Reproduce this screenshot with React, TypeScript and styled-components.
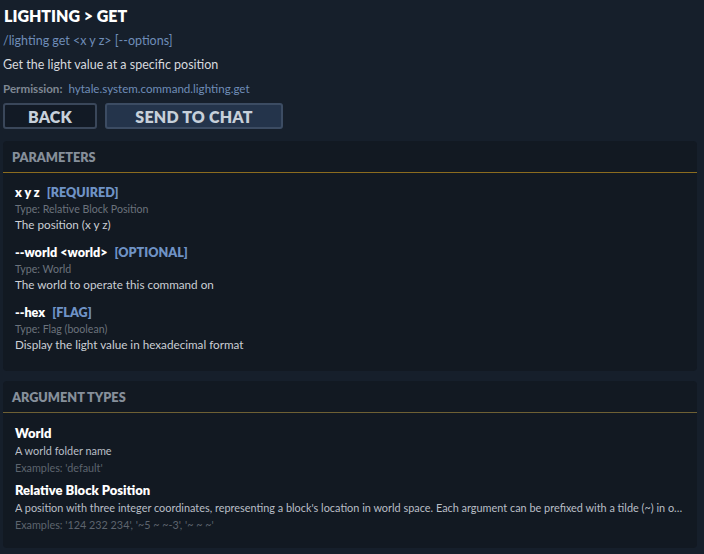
import React from 'react'
import styled, { createGlobalStyle } from 'styled-components'

const GlobalStyle = createGlobalStyle`
  html, body {
    margin: 0;
    padding: 0;
    background: #161f2b;
  }
  body {
    font-family: Lato, 'Noto Sans', sans-serif;
    color: #d2d6dc;
  }
`

interface Param {
  name: string
  tag: string
  type: string
  desc: string
}

interface ArgType {
  name: string
  desc: string
  examples: string
}

const params: Param[] = [
  { name: 'x y z', tag: '[REQUIRED]', type: 'Relative Block Position', desc: 'The position (x y z)' },
  { name: '--world <world>', tag: '[OPTIONAL]', type: 'World', desc: 'The world to operate this command on' },
  { name: '--hex', tag: '[FLAG]', type: 'Flag (boolean)', desc: 'Display the light value in hexadecimal format' },
]

const argTypes: ArgType[] = [
  { name: 'World', desc: 'A world folder name', examples: "Examples: 'default'" },
  {
    name: 'Relative Block Position',
    desc: "A position with three integer coordinates, representing a block's location in world space. Each argument can be prefixed with a tilde (~) in order to make the coordinate relative to the current position",
    examples: "Examples: '124 232 234', '~5 ~ ~-3', '~ ~ ~'",
  },
]

const App: React.FC = () => {
  return (
    <Page>
      <GlobalStyle />
      <Title>LIGHTING &gt; GET</Title>
      <Usage>/lighting get &lt;x y z&gt; [--options]</Usage>
      <Description>Get the light value at a specific position</Description>
      <Permission>
        <b>Permission:</b>
        <span>hytale.system.command.lighting.get</span>
      </Permission>
      <Buttons>
        <Button>BACK</Button>
        <Button primary>SEND TO CHAT</Button>
      </Buttons>

      <Panel>
        <PanelHeader>PARAMETERS</PanelHeader>
        <PanelBody>
          {params.map(p => (
            <ParamItem key={p.name}>
              <ParamName>
                {p.name}
                <Tag>{p.tag}</Tag>
              </ParamName>
              <TypeLine>Type: {p.type}</TypeLine>
              <ParamDesc>{p.desc}</ParamDesc>
            </ParamItem>
          ))}
        </PanelBody>
      </Panel>

      <Panel muted>
        <PanelHeader muted>ARGUMENT TYPES</PanelHeader>
        <ArgBody>
          {argTypes.map(a => (
            <ArgItem key={a.name}>
              <ArgName>{a.name}</ArgName>
              <ArgDesc>{a.desc}</ArgDesc>
              <Examples>{a.examples}</Examples>
            </ArgItem>
          ))}
        </ArgBody>
      </Panel>
    </Page>
  )
}

const Page = styled.div`
  width: 704px;
  height: 554px;
  box-sizing: border-box;
  padding: 5px 7px 0 3px;
  overflow: hidden;
`

const Title = styled.div`
  font-size: 16px;
  font-weight: 800;
  color: #ffffff;
  line-height: 22px;
  padding-left: 1px;
`

const Usage = styled.div`
  margin-top: 4px;
  font-size: 12.5px;
  color: #6f8db8;
  line-height: 20px;
`

const Description = styled.div`
  margin-top: 4px;
  font-size: 12.5px;
  color: #d6d9de;
  line-height: 20px;
`

const Permission = styled.div`
  margin-top: 5px;
  font-size: 11.6px;
  line-height: 18px;
  display: flex;
  gap: 6px;
  b {
    color: #7f8893;
    font-weight: 700;
  }
  span {
    color: #6f8db8;
  }
`

const Buttons = styled.div`
  display: flex;
  gap: 8px;
  margin-top: 5px;
`

const Button = styled.div<{ primary?: boolean }>`
  box-sizing: border-box;
  height: 26px;
  width: ${({ primary }) => (primary ? '178px' : '94px')};
  display: flex;
  align-items: center;
  justify-content: center;
  border-radius: 3px;
  border: 2px solid ${({ primary }) => (primary ? '#3c4c63' : '#3a475a')};
  background: ${({ primary }) => (primary ? '#24344b' : '#121a25')};
  color: #c7d0da;
  font-size: 16px;
  font-weight: 800;
  letter-spacing: 0.2px;
`

const Panel = styled.div<{ muted?: boolean }>`
  margin-top: ${({ muted }) => (muted ? '10px' : '12px')};
  background: #121922;
  border-radius: 4px;
  overflow: hidden;
`

const PanelHeader = styled.div<{ muted?: boolean }>`
  height: 31px;
  display: flex;
  align-items: center;
  padding-left: 9px;
  font-size: 12.7px;
  font-weight: 800;
  color: #868f9a;
  border-bottom: 1px solid ${({ muted }) => (muted ? '#6e6034' : '#8b6c1f')};
`

const PanelBody = styled.div`
  padding: 11px 12px 20px;
  display: flex;
  flex-direction: column;
  gap: 13px;
`

const ParamItem = styled.div`
  display: flex;
  flex-direction: column;
`

const ParamName = styled.div`
  font-size: 12.6px;
  font-weight: 800;
  color: #ffffff;
  line-height: 17px;
`

const Tag = styled.span`
  margin-left: 7px;
  color: #6f93c6;
`

const TypeLine = styled.div`
  font-size: 10.6px;
  color: #6b727c;
  line-height: 16px;
`

const ParamDesc = styled.div`
  font-size: 11.7px;
  color: #cbcfd5;
  line-height: 14px;
`

const ArgBody = styled.div`
  padding: 11px 12px 15px;
  display: flex;
  flex-direction: column;
  gap: 5px;
`

const ArgItem = styled.div`
  display: flex;
  flex-direction: column;
  gap: 1px;
`

const ArgName = styled.div`
  font-size: 13px;
  font-weight: 800;
  color: #ffffff;
  line-height: 18px;
`

const ArgDesc = styled.div`
  font-size: 10.9px;
  color: #b9bec6;
  line-height: 16px;
  white-space: nowrap;
  overflow: hidden;
  text-overflow: ellipsis;
`

const Examples = styled.div`
  font-size: 10.8px;
  color: #5d646e;
  line-height: 16px;
`

export default App
